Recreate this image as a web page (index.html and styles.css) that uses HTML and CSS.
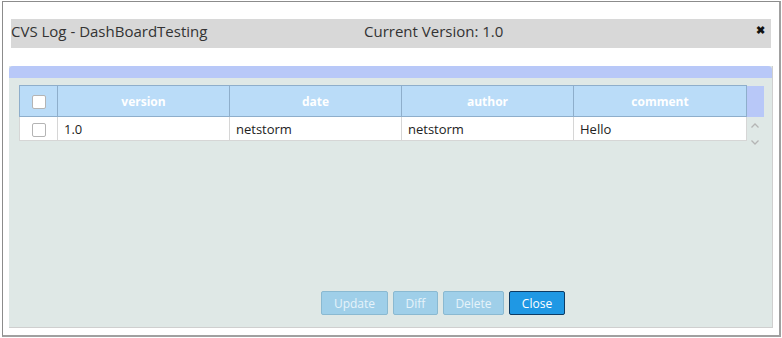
FILE: index.html
```html
<!DOCTYPE html>
<html>
  <head>
    <meta charset='utf-8'/>
    <title>CVS Log</title>
    <link rel="stylesheet" href="styles.css">
  </head>
  <body>
    <div class='dialog'>
      <div class='title-bar'>
        <span class='title'>CVS Log - DashBoardTesting</span>
        <span class='version'>Current Version: 1.0</span>
        <span class='close-x'>&#10006;</span>
      </div>

      <div class='panel'>
        <div class='panel-strip'></div>
        <div class='grid-wrap'>
          <table class='grid'>
            <colgroup>
              <col class='col-check'>
              <col class='col-data'>
              <col class='col-data'>
              <col class='col-data'>
              <col class='col-last'>
              <col class='col-scroll'>
            </colgroup>
            <thead>
              <tr>
                <th><span class='check'></span></th>
                <th>version</th>
                <th>date</th>
                <th>author</th>
                <th>comment</th>
                <th class='scroll-head'></th>
              </tr>
            </thead>
            <tbody>
              <tr>
                <td class='check-cell'><span class='check'></span></td>
                <td>1.0</td>
                <td>netstorm</td>
                <td>netstorm</td>
                <td>Hello</td>
                <td class='scroll-cell'>
                  <svg width='10' height='24' viewBox='0 0 10 24'>
                    <path d='M1.5 10.5 L5 7 L8.5 10.5' fill='none' stroke='#b5b5b5' stroke-width='1.3'/>
                    <path d='M1.5 23.5 L5 27 L8.5 23.5' fill='none' stroke='#b5b5b5' stroke-width='1.3'/>
                  </svg>
                </td>
              </tr>
            </tbody>
          </table>
        </div>

        <div class='buttons'>
          <button class='btn btn-update' disabled>Update</button>
          <button class='btn btn-diff' disabled>Diff</button>
          <button class='btn btn-delete' disabled>Delete</button>
          <button class='btn btn-close'>Close</button>
        </div>
      </div>
    </div>
  </body>
</html>
```

FILE: styles.css
```css
* {
  font-family: 'Open Sans', sans-serif;
  box-sizing: border-box;
}

body {
  margin: 0;
  background: #fff;
}

.dialog {
  margin: 1px 0 0 2px;
  width: 779px;
  height: 336px;
  border: 1px solid #8c8c8c;
  border-right-width: 2px;
  border-bottom-width: 2px;
  border-right-color: #a0a0a0;
  border-bottom-color: #a0a0a0;
  padding: 17px 0 0 6px;
}

.title-bar {
  position: relative;
  display: flex;
  align-items: flex-start;
  margin-left: 2px;
  padding-top: 2px;
  width: 760px;
  height: 29px;
  background: #d8d8d8;
  color: #333;
  font-size: 15px;
}

.title {
  width: 353px;
}

.close-x {
  position: absolute;
  right: 6px;
  top: 3px;
  font-size: 11px;
  font-weight: bold;
  color: #111;
}

.panel {
  display: flex;
  flex-direction: column;
  margin-top: 18px;
  width: 764px;
  height: 262px;
  background: #dfe8e6;
  border-right: 1px solid #cfcfcf;
  border-bottom: 1px solid #cfcfcf;
}

.panel-strip {
  height: 12px;
  background: #b8c8f8;
  border-radius: 4px 4px 0 0;
}

.grid-wrap {
  padding: 7px 0 0 10px;
}

.grid {
  table-layout: fixed;
  border-collapse: collapse;
  width: 744px;
  font-size: 13px;
  color: #222;
}

.col-check { width: 38px; }
.col-data { width: 172px; }
.col-last { width: 173px; }
.col-scroll { width: 17px; }

.grid th {
  height: 31px;
  background: #badcf8;
  border: 1px solid #8eaecb;
  color: #fff;
  font-size: 12px;
  font-weight: bold;
  text-align: center;
  padding: 0;
}

.grid th.scroll-head {
  background: #b8c8f8;
  border: none;
}

.grid td {
  height: 24px;
  background: #fff;
  border: 1px solid #d6d6d6;
  border-top: none;
  padding: 0 6px;
}

.grid td.check-cell {
  padding: 0;
  text-align: center;
}

.grid td.scroll-cell {
  background: transparent;
  border: none;
  padding: 0;
  text-align: center;
  vertical-align: top;
}

.scroll-cell svg {
  display: block;
  margin: 0 auto;
  overflow: visible;
}

.check {
  display: inline-block;
  width: 14px;
  height: 14px;
  background: #fff;
  border: 1px solid #b4b4b4;
  border-radius: 2px;
  vertical-align: middle;
}

.buttons {
  display: flex;
  gap: 5px;
  margin-top: auto;
  margin-bottom: 12px;
  padding-left: 312px;
}

.btn {
  height: 24px;
  padding: 0;
  border: 1px solid #8ab9d1;
  border-radius: 2px;
  background: #9fcfe9;
  color: #e6f3fa;
  font-size: 12px;
}

.btn-update { width: 67px; }
.btn-diff { width: 45px; }
.btn-delete { width: 61px; }

.btn-close {
  width: 56px;
  background: #1f98e4;
  border-color: #0e3b63;
  color: #fff;
}
```
